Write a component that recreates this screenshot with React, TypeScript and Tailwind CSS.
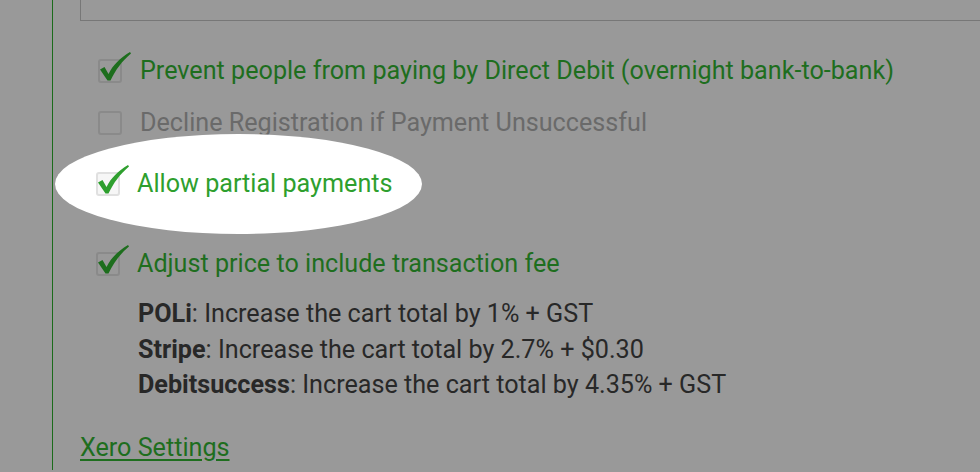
import React from "react";

function Check({ light }: { light?: boolean }) {
  const c = light ? "#2e9f2e" : "#1d6e1d";
  return (
    <svg
      className="absolute left-0 top-[-8px]"
      width="34"
      height="32"
      viewBox="0 0 34 32"
    >
      <path
        d="M2 18.5 L6.5 16 L10.5 23 C15 14 22 7 32 1 L33 2.5 C24 10 17.5 19 12.5 29.5 L9.5 29.5 Z"
        fill={c}
      />
    </svg>
  );
}

function Box({ checked, light }: { checked?: boolean; light?: boolean }) {
  return (
    <div className="relative w-[24px] h-[24px] shrink-0">
      <div
        className={
          light
            ? "w-[24px] h-[24px] rounded-[3px] border-2 border-[#e0e0e0] bg-[#f6f6f6]"
            : "w-[24px] h-[24px] rounded-[3px] border-2 border-[#8a8a8a] bg-[#999999]"
        }
      />
      {checked && <Check light={light} />}
    </div>
  );
}

export default function App() {
  return (
    <div
      className="w-[980px] h-[472px] bg-[#999999] overflow-hidden"
      style={{ fontFamily: "Roboto, 'Liberation Sans', sans-serif" }}
    >
      <div className="ml-[52px] h-[470px] border-l border-[#1b6b1b] pl-[27px] relative">
        <div className="h-[21px] w-[900px] border-l border-b border-[#777777]" />

        <div className="pl-[18px] pt-[36px] text-[25.17px] leading-[28px]">
          <div className="flex items-center gap-[18px] text-[#1e6e1e]">
            <Box checked />
            <span>Prevent people from paying by Direct Debit (overnight bank-to-bank)</span>
          </div>
          <div className="flex items-center gap-[18px] text-[#6a6a6a] mt-[24px]">
            <Box />
            <span>Decline Registration if Payment Unsuccessful</span>
          </div>

          <div className="relative mt-[33px] -ml-[2px]">
            <div className="absolute left-[-41px] top-[-36px] w-[367px] h-[100px] rounded-[50%] bg-white" />
            <div className="relative flex items-center gap-[17px] text-[#2e9f2e]">
              <Box checked light />
              <span>Allow partial payments</span>
            </div>
          </div>

          <div className="flex items-center gap-[17px] text-[#1e6e1e] mt-[52px] -ml-[2px]">
            <Box checked />
            <span>Adjust price to include transaction fee</span>
          </div>

          <div className="ml-[40px] mt-[18px] text-[#282828] leading-[35.5px]">
            <div>
              <b className="font-bold">POLi</b>: Increase the cart total by 1% + GST
            </div>
            <div>
              <b className="font-bold">Stripe</b>: Increase the cart total by 2.7% + $0.30
            </div>
            <div>
              <b className="font-bold">Debitsuccess</b>: Increase the cart total by 4.35% + GST
            </div>
          </div>
        </div>

        <a className="block mt-[31px] text-[25.17px] leading-[28px] text-[#1e6e1e] underline underline-offset-[3px]">
          Xero Settings
        </a>
      </div>
    </div>
  );
}
